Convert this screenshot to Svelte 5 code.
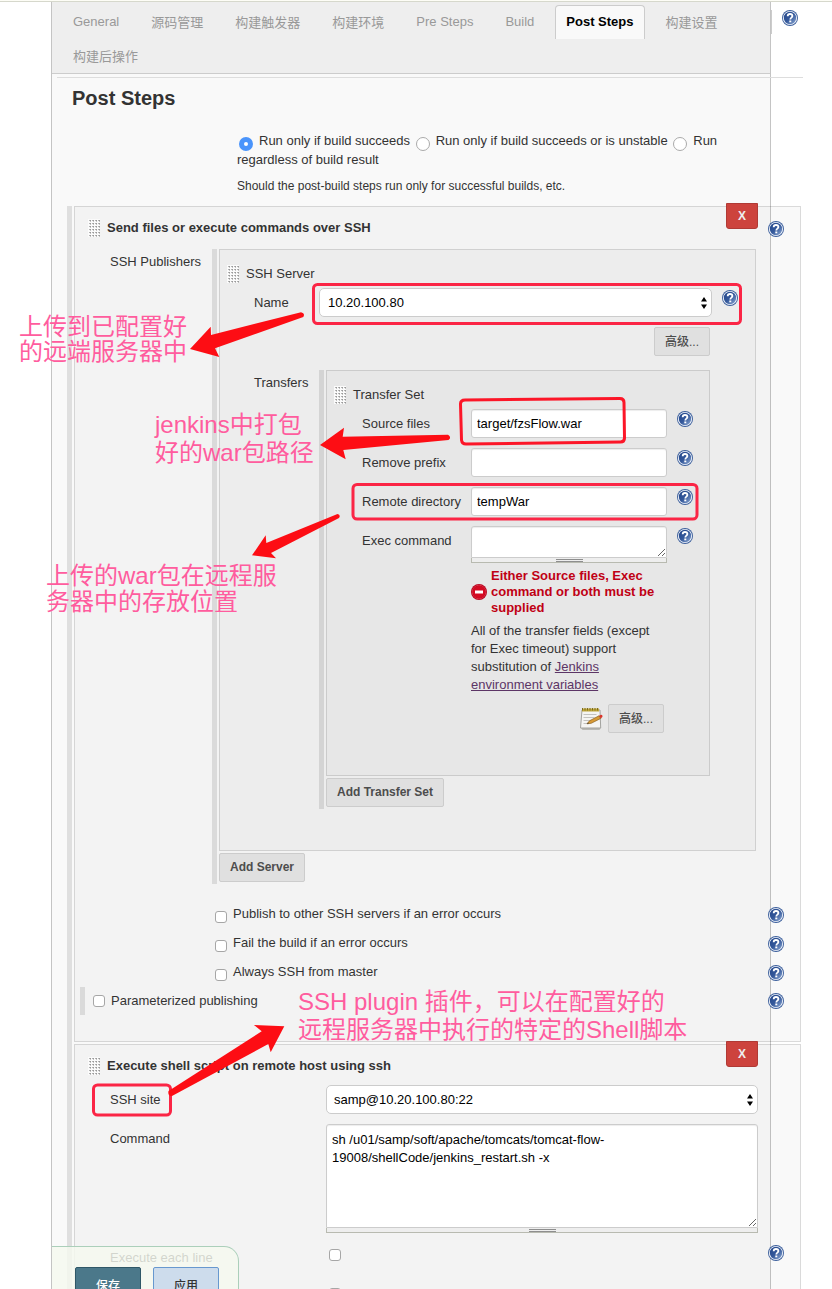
<script>
  const tabs = ['General', '源码管理', '构建触发器', '构建环境', 'Pre Steps', 'Build', 'Post Steps', '构建设置', '构建后操作'];
  let active = $state('Post Steps');

  const conditions = ['Run only if build succeeds', 'Run only if build succeeds or is unstable', 'Run regardless of build result'];
  let condition = $state(conditions[0]);

  const textFields = [
    { id: 'source-files', label: 'Source files', value: 'target/fzsFlow.war' },
    { id: 'remove-prefix', label: 'Remove prefix', value: '' },
    { id: 'remote-directory', label: 'Remote directory', value: 'tempWar' }
  ];

  const options = ['Publish to other SSH servers if an error occurs', 'Fail the build if an error occurs', 'Always SSH from master'];

  const script = 'sh /u01/samp/soft/apache/tomcats/tomcat-flow-19008/shellCode/jenkins_restart.sh -x';
</script>

{#snippet help()}
  <button type="button" class="help" aria-label="Help">
    <svg viewBox="0 0 16 16" width="16" height="16">
      <defs>
        <linearGradient id="helpFill" x1="0" y1="0" x2="1" y2="1">
          <stop offset="0" stop-color="#23468a" />
          <stop offset="0.5" stop-color="#34589a" />
          <stop offset="1" stop-color="#8fabd6" />
        </linearGradient>
      </defs>
      <circle cx="8" cy="8" r="8" fill="#3c5f9c" />
      <circle cx="8" cy="8" r="7.1" fill="#f4f7fc" />
      <circle cx="8" cy="8" r="6.2" fill="url(#helpFill)" />
      <path d="M5.7 6.3C5.7 4.7 6.7 4 8 4s2.4.8 2.4 2.1c0 1.5-2.1 1.6-2.1 3.3" fill="none" stroke="#fff" stroke-width="1.8" />
      <rect x="7.3" y="10.5" width="2" height="1.8" fill="#fff" />
    </svg>
  </button>
{/snippet}

{#snippet grip()}
  <svg class="grip" viewBox="0 0 12 18" width="12" height="18" aria-hidden="true">
    <rect width="12" height="18" fill="#fbfbfb" />
    {#each [1, 4, 7, 10, 13, 16] as y}
      {#each [1, 4, 7, 10] as x}
        <rect {x} {y} width="2" height="1" fill="#b4b4b4" />
        <rect x={x + 1} y={y} width="1" height="1" fill="#999" />
        <rect x={x + 1} y={y + 1} width="1" height="1" fill="#c4c4c4" />
      {/each}
    {/each}
  </svg>
{/snippet}

{#snippet picker(id, value)}
  <div class="picker">
    <select {id}><option>{value}</option></select>
    <svg viewBox="0 0 6 12" width="6" height="12" aria-hidden="true">
      <path d="M3 0L6 4.6H0zM3 12L0 7.4h6z" fill="#000" />
    </svg>
  </div>
{/snippet}

<div class="window">
  <div class="scroller">
    <div class="top-line"></div>
    <main class="panel">
      <nav class="tabs">
        {#each tabs as tab}
          <button type="button" class="tab" class:active={tab === active} onclick={() => (active = tab)}>{tab}</button>
        {/each}
      </nav>
      <div class="section-help">{@render help()}</div>

      <section class="steps">
        <h1>Post Steps</h1>
        <div class="condition">
          <div class="choices">
            {#each conditions as text}
              <label><input type="radio" name="condition" value={text} bind:group={condition} />{text}</label>{' '}
            {/each}
          </div>
          <p>Should the post-build steps run only for successful builds, etc.</p>
        </div>

        <div class="repeat outer">
          <section class="block">
            <header class="head">
              {@render grip()}
              <h2>Send files or execute commands over SSH</h2>
              {@render help()}
            </header>
            <button type="button" class="remove">X</button>

            <div class="row publishers">
              <span class="label">SSH Publishers</span>
              <div class="repeat">
                <section class="block server">
                  <header class="head sub">
                    {@render grip()}
                    <h3>SSH Server</h3>
                  </header>
                  <div class="row server-row">
                    <label class="label" for="server-name">Name</label>
                    <div class="wide">{@render picker('server-name', '10.20.100.80')}</div>
                    {@render help()}
                  </div>
                  <div class="row server-row">
                    <div class="actions"><button type="button" class="btn cjk">高级...</button></div>
                  </div>
                  <div class="row server-row transfers">
                    <span class="label">Transfers</span>
                    <div class="repeat">
                      <section class="block transfer">
                        <header class="head sub">
                          {@render grip()}
                          <h3>Transfer Set</h3>
                        </header>
                        {#each textFields as field}
                          <div class="row field">
                            <label class="label" for={field.id}>{field.label}</label>
                            <input type="text" id={field.id} value={field.value} />
                            {@render help()}
                          </div>
                        {/each}
                        <div class="row field exec">
                          <label class="label" for="exec-command">Exec command</label>
                          <div class="area">
                            <textarea id="exec-command"></textarea>
                            <div class="handle"></div>
                          </div>
                          {@render help()}
                        </div>
                        <div class="notes">
                          <div class="error">
                            <svg viewBox="0 0 16 16" width="16" height="16" aria-hidden="true">
                              <circle cx="8" cy="8" r="8" fill="#b5001a" />
                              <circle cx="8" cy="8" r="6.8" fill="none" stroke="#e8485c" stroke-width="0.7" />
                              <circle cx="8" cy="8" r="6.3" fill="#d40a22" />
                              <rect x="4" y="6.5" width="8" height="3" fill="#fff" />
                            </svg>
                            <strong>Either Source files, Exec command or both must be supplied</strong>
                          </div>
                          <p>All of the transfer fields (except for Exec timeout) support substitution of <a href="#variables">Jenkins environment variables</a></p>
                        </div>
                        <div class="more">
                          <svg viewBox="0 0 24 24" width="24" height="24" aria-hidden="true">
                            <path d="M1.500 20.500h20.500l-1.500 2.500H3.500z" fill="#b9b9b5" />
                            <path d="M3 3h18l.7 18H1.500z" fill="#f5f5f3" stroke="#a3a39f" />
                            <rect x="3" y="1.500" width="17" height="3" fill="#c0a73c" />
                            <path d="M3.500 1v2.500M6 1v2.500M8.500 1v2.500M11 1v2.500M13.500 1v2.500M16 1v2.500M18.500 1v2.500" stroke="#7e6c1c" />
                            <path d="M4.500 7.500h13M4.500 10.500h11M4.500 13.500h8M4.500 16.500h4" stroke="#c3c3c0" />
                            <path d="M8 16.800l2.500-3L20 8.800l1.800 2.600-9.600 4.900z" fill="#d89a35" stroke="#8b6220" stroke-width="0.7" />
                            <path d="M20 8.800l2-1c1.200-.1 1.900 1.300 1.300 2.200l-1.500 1.400z" fill="#d9342b" />
                            <path d="M8 16.800l1.100-1.300.8 1.100z" fill="#333" />
                          </svg>
                          <button type="button" class="btn cjk">高级...</button>
                        </div>
                      </section>
                      <button type="button" class="btn">Add Transfer Set</button>
                    </div>
                  </div>
                </section>
                <button type="button" class="btn">Add Server</button>
              </div>
            </div>

            <div class="options">
              {#each options as text}
                <div class="option">
                  <label><input type="checkbox" /><span>{text}</span></label>
                  {@render help()}
                </div>
              {/each}
            </div>
            <div class="option param">
              <label><input type="checkbox" /><span>Parameterized publishing</span></label>
              {@render help()}
            </div>
          </section>

          <section class="block script">
            <header class="head">
              {@render grip()}
              <h2>Execute shell script on remote host using ssh</h2>
            </header>
            <button type="button" class="remove">X</button>
            <div class="row script-row">
              <label class="label" for="ssh-site">SSH site</label>
              {@render picker('ssh-site', 'samp@10.20.100.80:22')}
            </div>
            <div class="row script-row">
              <label class="label" for="command">Command</label>
              <div class="area tall">
                <textarea id="command" value={script}></textarea>
                <div class="handle"></div>
              </div>
            </div>
            <div class="row script-row tick">
              <label class="label" for="each-line">Execute each line</label>
              <input type="checkbox" id="each-line" />
              {@render help()}
            </div>
            <div class="row script-row tick">
              <span class="label"></span>
              <input type="checkbox" aria-label="Hide command" />
            </div>
          </section>
        </div>
      </section>
    </main>

    <svg class="marks" viewBox="0 0 832 1289" width="832" height="1289" aria-hidden="true">
      <g fill="none" stroke="#fb2545" stroke-width="3" stroke-linejoin="round">
        <rect x="313.500" y="284.500" width="427" height="39" rx="4" />
        <path stroke="#fc1628" d="M465 400L620 398.500Q624 398.500 624 402.500L624.500 438Q624.500 442 620.500 442L466 444Q462 444 461.500 440L460.500 404Q460.500 400 465 400z" />
        <rect x="353" y="484.500" width="344" height="34.500" rx="4" />
        <rect x="93.500" y="1085" width="77" height="30" rx="4" />
      </g>
      <g fill="#fd0d14">
        <path d="M190 349L210.700 326.700L211 335L301 312.200Q305.500 313 303.300 317L215 348.300L219.300 357z" />
        <path d="M320 445L344 427.700L342.700 436.700L448 434.800Q452 437.500 448.500 440L343.300 450L345.700 459.300z" />
        <path d="M252 555.300L265.700 535.300L266.300 543L337.500 514Q341 515 339 518L271 553L276 558.300z" />
        <path d="M284.300 1026.300L254 1025L261.700 1031.300L168.500 1091Q167.500 1096 172 1096L268.300 1044L270.700 1052.300z" />
      </g>
    </svg>
    <p class="note" style:left="19px" style:top="314px" style:line-height="25px">上传到已配置好<br />的远端服务器中</p>
    <p class="note" style:left="155px" style:top="411px" style:line-height="28px">jenkins中打包<br />好的war包路径</p>
    <p class="note" style:left="46px" style:top="563px" style:line-height="26px">上传的war包在远程服<br />务器中的存放位置</p>
    <p class="note" style:left="298px" style:top="988px" style:line-height="28px">SSH plugin 插件，可以在配置好的<br />远程服务器中执行的特定的Shell脚本</p>
  </div>

  <div class="save-bar">
    <button type="submit" class="save">保存</button>
    <button type="button" class="apply">应用</button>
  </div>
</div>

<style>
  .window {
    position: relative;
    height: 100vh;
    overflow: hidden;
    background: #fff;
    color: #333;
    font: 13px/18px 'Liberation Sans', 'Noto Sans CJK SC', sans-serif;
  }
  .window :is(button, input, select, textarea) {
    font-family: inherit;
    box-sizing: border-box;
    margin: 0;
  }
  .scroller {
    position: relative;
    height: 100%;
    overflow: hidden auto;
    scrollbar-width: none;
  }
  .top-line {
    height: 1px;
    background: #fdfdf6;
    border-bottom: 1px solid #d6d8cc;
  }
  .panel {
    position: relative;
    margin: 0 61px 0 51px;
    border: solid #c4c4c4;
    border-width: 0 1px;
    background: #f9f9f9;
  }
  h1, h2, h3, p { margin: 0; }

  .tabs {
    display: flex;
    flex-wrap: wrap;
    gap: 0 10px;
    padding: 3px 10px 0;
    background: #eee;
    border-bottom: 1px solid #ccc;
  }
  .tab {
    height: 34px;
    padding: 0 10px 2px;
    border: 1px solid transparent;
    border-bottom: 0;
    border-radius: 4px 4px 0 0;
    background: none;
    color: #999;
    font-size: 13px;
  }
  .tab.active {
    background: #f9f9f9;
    border-color: #ccc;
    color: #000;
    font-weight: bold;
  }
  .section-help {
    position: absolute;
    top: 8px;
    right: -28px;
    padding: 0 0 8px 10px;
    border-left: 1px solid #ccc;
  }
  .help {
    display: block;
    width: 16px;
    height: 16px;
    padding: 0;
    border: 0;
    background: none;
  }
  .help svg, .grip { display: block; }

  .steps {
    margin: 3px -33px 0 5px;
    border-top: 1px solid #ddd;
  }
  h1 {
    padding: 8px 15px 0;
    font-size: 20px;
    line-height: 24px;
  }
  .condition {
    padding: 22px 45px 11px 180px;
  }
  .condition p {
    margin-top: 9px;
    font-size: 12px;
  }
  input[type='radio'] {
    appearance: none;
    width: 14px;
    height: 14px;
    margin: 0 6px 0 2px;
    border: 1px solid #aaa;
    border-radius: 50%;
    background: #fff;
    vertical-align: -6px;
  }
  .choices { height: 36px; }
  input[type='radio']:checked {
    border: 5px solid #4a94fb;
  }

  .repeat {
    min-width: 0;
    padding: 0 0 2px 2px;
    border-left: 5px solid rgba(0, 0, 0, 0.1);
  }
  .repeat > .btn { display: block; }
  .outer { margin: 0 2px 0 10px; }
  .block {
    position: relative;
    margin-bottom: 2px;
    border: 1px solid rgba(0, 0, 0, 0.12);
    background: rgba(0, 0, 0, 0.025);
  }
  .head {
    display: flex;
    align-items: center;
    gap: 7px;
    height: 42px;
    padding: 0 16px 0 13px;
  }
  .script .head {
    height: 38px;
    padding-top: 2px;
  }
  .head .help { margin: 2px 0 0 auto; }
  .head.sub {
    height: 29px;
    padding: 9px 7px 0;
  }
  h2 { font-size: 13px; line-height: 18px; }
  h3 { font-size: 13px; line-height: 18px; font-weight: normal; }
  .remove {
    position: absolute;
    top: -4px;
    right: 42px;
    width: 32px;
    height: 26px;
    padding: 0;
    border: 1px solid #b03a35;
    border-radius: 0 0 3px 3px;
    background: #cd433d;
    color: #eee;
    font-size: 12px;
    font-weight: bold;
  }

  .row { display: grid; align-items: start; }
  .label { padding-top: 6px; }
  .row > .help { margin: 2px 0 0 10px; }
  .publishers { grid-template-columns: 137px 1fr 44px; }
  .publishers > .label { padding-left: 35px; padding-top: 4px; }
  .server { padding-bottom: 41px; }
  .server-row {
    grid-template-columns: 99px 1fr 45px;
    margin-bottom: 10px;
  }
  .server-row > .label { padding-left: 34px; }
  .server-row > .help { margin-left: 12px; }
  .server-row.transfers { margin: 14px 0 0; }
  .transfers > .label { padding-top: 4px; }
  .wide { margin-right: -2px; }
  .actions { grid-column: 2; justify-self: end; }

  .transfer { padding-bottom: 42px; }
  .field {
    grid-template-columns: 144px 1fr 42px;
    margin-bottom: 10px;
  }
  .field > .label { padding-left: 35px; }
  .exec { margin-bottom: 5px; }
  input[type='text'], textarea {
    display: block;
    width: 100%;
    height: 29px;
    padding: 5px;
    border: 1px solid #ccc;
    border-radius: 3px;
    background: #fff;
    box-shadow: inset 0 1px 1px rgba(0, 0, 0, 0.075);
    color: #000;
    font-size: 13px;
    line-height: 18px;
  }
  textarea {
    height: 32px;
    padding-top: 6px;
    border-radius: 3px 3px 0 0;
    resize: both;
    overflow: hidden;
  }
  .tall textarea { height: 104px; }
  .handle {
    display: flex;
    justify-content: center;
    height: 5px;
    box-sizing: border-box;
    border: solid #b8bab0;
    border-width: 0 1px 1px;
    background: #eee;
  }
  .handle::after {
    content: '';
    width: 27px;
    height: 1px;
    margin-top: 1px;
    border: solid #8e8e8e;
    border-width: 1px 0;
  }
  .notes { margin: 0 42px 0 144px; }
  .error {
    display: flex;
    align-items: center;
    gap: 4px;
    color: #c00014;
    line-height: 16px;
  }
  .error svg { flex: none; }
  .notes p { margin-top: 6px; }
  a { color: #5c3566; }
  .more {
    display: flex;
    justify-content: flex-end;
    align-items: center;
    gap: 5px;
    margin: 10px 45px 0 0;
  }
  .btn {
    height: 29px;
    padding: 0 10px 2px;
    border: 1px solid #ccc;
    border-radius: 2px;
    background: #e0e0e0;
    color: #4d4d4d;
    font-size: 12px;
    font-weight: bold;
  }
  .cjk { font-weight: 500; }

  .picker { position: relative; }
  select {
    display: block;
    appearance: none;
    width: 100%;
    height: 29px;
    padding: 0 20px 1px 8px;
    border: 1px solid #ccc;
    border-radius: 5px;
    background: #fff;
    color: #000;
    font-size: 13px;
  }
  .script select { padding-left: 7px; }
  .picker svg {
    position: absolute;
    top: 9px;
    right: 5px;
    pointer-events: none;
  }

  .options { padding: 16px 0 0 139px; }
  .option {
    display: flex;
    justify-content: space-between;
    align-items: center;
    height: 29px;
    padding-right: 16px;
  }
  .option label { display: flex; align-items: center; gap: 6px; }
  .option label span { margin-bottom: 2px; }
  .options input { margin-top: 4px; }
  input[type='checkbox'] {
    appearance: none;
    width: 12px;
    height: 12px;
    border: 1px solid #a6a6a6;
    border-radius: 3px;
    background: #fff;
  }
  .options .option input { margin-left: 1px; }
  .param {
    height: 28px;
    margin: 0 0 26px 5px;
    padding-left: 8px;
    border-left: 5px solid rgba(0, 0, 0, 0.1);
  }
  .param label span { margin: 0; }

  .script-row {
    grid-template-columns: 251px 1fr 42px;
    margin-bottom: 10px;
  }
  .script-row > .label { padding-left: 35px; }
  .tick { min-height: 29px; }
  .tick input { margin: 6px 0 0 3px; }

  .marks {
    position: absolute;
    top: 0;
    left: 0;
    pointer-events: none;
  }
  .note {
    position: absolute;
    color: #ff5c9e;
    font-size: 24px;
    white-space: nowrap;
    pointer-events: none;
  }

  .save-bar {
    position: absolute;
    bottom: -34px;
    left: 52px;
    display: flex;
    gap: 12px;
    padding: 20px 19px 20px 22px;
    border: 1px solid #abcfba;
    border-left-width: 0;
    padding-left: 23px;
    border-radius: 0 15px 0 0;
    background: rgba(245, 249, 239, 0.82);
  }
  .save-bar button {
    width: 66px;
    height: 35px;
    padding: 0;
    border: 1px solid #2f5767;
    border-radius: 2px;
    background: #4b788a;
    color: #fff;
    font-size: 12px;
    font-weight: 500;
  }
  .save-bar .apply {
    border-color: #6798cf;
    background: #cddcec;
    color: #333;
  }
</style>
